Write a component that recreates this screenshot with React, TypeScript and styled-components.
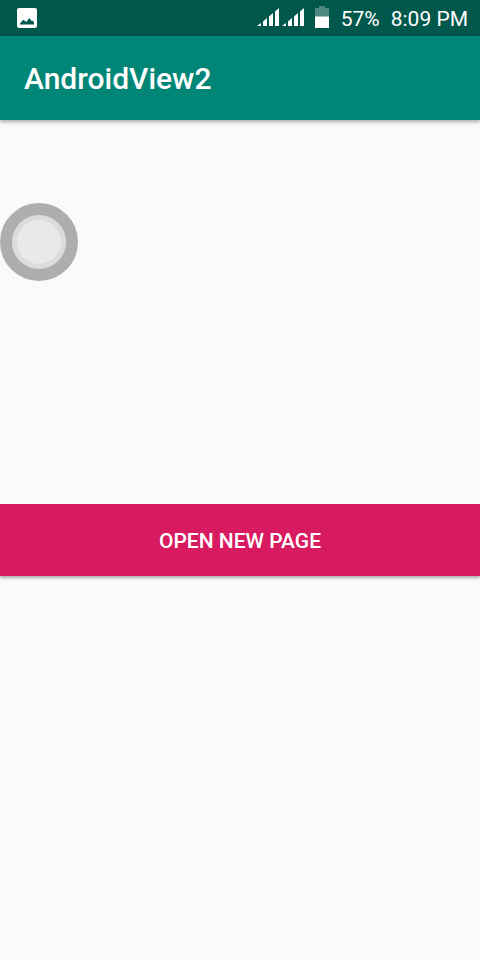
import React from "react";
import styled, { createGlobalStyle } from "styled-components";

const GlobalStyle = createGlobalStyle`
  *, *::before, *::after { box-sizing: border-box; }
  body {
    margin: 0;
    background: #fafafa;
    font-family: Roboto, "Liberation Sans", sans-serif;
  }
`;

const Screen = styled.div`
  position: relative;
  display: flex;
  flex-direction: column;
  min-height: 100vh;
`;

const StatusBar = styled.div`
  display: flex;
  align-items: center;
  justify-content: space-between;
  height: 36px;
  padding: 0 12px 0 16px;
  background: #00574b;
  color: #fff;
`;

const StatusGroup = styled.div`
  display: flex;
  align-items: center;
`;

const StatusIcons = styled.div`
  display: flex;
  align-items: center;
  gap: 3px;
  padding-bottom: 2px;
  margin-right: 12px;
`;

const Battery = styled.svg`
  display: block;
  margin-left: 8px;
`;

const StatusText = styled.span`
  font-size: 21px;
  line-height: 24px;
  padding-top: 2px;
  white-space: nowrap;

  & + & {
    margin-left: 11px;
  }
`;

const AppBar = styled.header`
  display: flex;
  align-items: center;
  height: 84px;
  padding: 2px 24px 0;
  background: #008577;
  box-shadow: 0 2px 4px rgba(0, 0, 0, 0.32);
`;

const Title = styled.h1`
  margin: 0;
  color: #fff;
  font-size: 30px;
  font-weight: 500;
  line-height: 36px;
`;

const Content = styled.main`
  flex: 1;
  display: flex;
  flex-direction: column;
  justify-content: center;
`;

const PageButton = styled.button`
  width: 100%;
  height: 72px;
  padding: 2px 0 0;
  border: 0;
  background: #d81b60;
  color: #fff;
  box-shadow: 0 2px 3px rgba(0, 0, 0, 0.32);
  font-family: inherit;
  font-size: 21px;
  font-weight: 500;
  line-height: 24px;
  text-transform: uppercase;
  cursor: pointer;
`;

const AssistiveButton = styled.button`
  position: absolute;
  top: 203px;
  left: 0;
  width: 78px;
  height: 78px;
  display: grid;
  place-items: center;
  padding: 0;
  border: 12px solid #aeaeae;
  border-radius: 50%;
  background: #aeaeae;
  cursor: pointer;
`;

const AssistiveCore = styled.span`
  width: 54px;
  height: 54px;
  border: 5px solid #dcdcdc;
  border-radius: 50%;
  background: #e9e9e9;
`;

function SignalIcon() {
  return (
    <svg width="22" height="18" viewBox="0 0 22 18" fill="#fff" aria-hidden="true">
      <path d="M0 18 4 15V18ZM6 13.4 10 10.1V18H6ZM12 8.5 16 5.1V18H12ZM18 3.5 22 0V18H18Z" />
    </svg>
  );
}

function PictureIcon() {
  return (
    <svg width="22" height="22" viewBox="0 0 22 22" aria-hidden="true">
      <path
        fill="#fff"
        fillRule="evenodd"
        d="M3 1H19a2 2 0 0 1 2 2V19a2 2 0 0 1-2 2H3a2 2 0 0 1-2-2V3a2 2 0 0 1 2-2ZM4 17.4H18V15.5L16.5 13.5 15.5 14 13.4 11 10.3 15 7.2 12.8 4 16.4Z"
      />
    </svg>
  );
}

export default function App() {
  return (
    <>
      <GlobalStyle />
      <Screen>
        <StatusBar>
          <PictureIcon />
          <StatusGroup>
            <StatusIcons>
              <SignalIcon />
              <SignalIcon />
              <Battery width="14" height="22" viewBox="0 0 14 22" aria-hidden="true">
                <path fill="#4d8981" d="M4 0H10V2H14V11H0V2H4Z" />
                <path fill="#fff" d="M0 10.5H14V22H0Z" />
              </Battery>
            </StatusIcons>
            <StatusText>57%</StatusText>
            <StatusText>8:09 PM</StatusText>
          </StatusGroup>
        </StatusBar>
        <AppBar>
          <Title>AndroidView2</Title>
        </AppBar>
        <Content>
          <PageButton type="button">Open new page</PageButton>
        </Content>
        <AssistiveButton type="button" aria-label="Assistive menu">
          <AssistiveCore />
        </AssistiveButton>
      </Screen>
    </>
  );
}
